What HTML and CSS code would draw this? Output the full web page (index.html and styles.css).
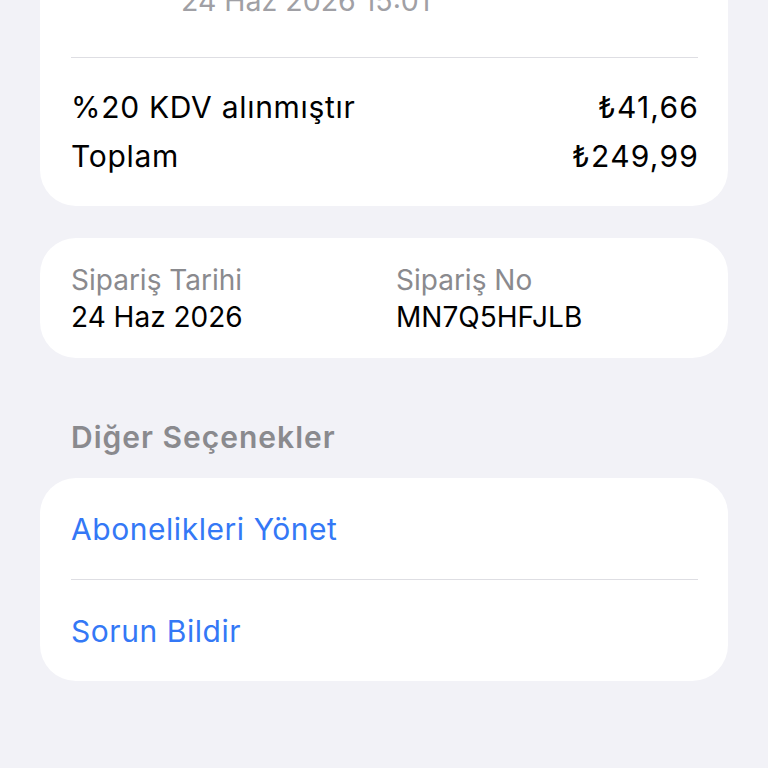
FILE: index.html
```html
<!DOCTYPE html>
<html lang="tr">
<head>
  <meta charset="UTF-8" />
  <meta name="viewport" content="width=device-width, initial-scale=1.0"/>
  <title>Makbuz</title>
  <link rel="stylesheet" href="styles.css">
</head>
<body>

  <div class="card receipt">
    <div class="app-date">24 Haz 2026 15:01</div>
    <div class="divider"></div>
    <div class="totals">
      <div class="total-row">
        <span>%20 KDV alınmıştır</span>
        <span class="amount">₺41,66</span>
      </div>
      <div class="total-row">
        <span>Toplam</span>
        <span class="amount">₺249,99</span>
      </div>
    </div>
  </div>

  <div class="card order">
    <div class="order-col">
      <div class="order-label">Sipariş Tarihi</div>
      <div class="order-value">24 Haz 2026</div>
    </div>
    <div class="order-col">
      <div class="order-label">Sipariş No</div>
      <div class="order-value">MN7Q5HFJLB</div>
    </div>
  </div>

  <h3 class="section-title">Diğer Seçenekler</h3>

  <div class="card options">
    <a class="option" href="#">Abonelikleri Yönet</a>
    <div class="divider"></div>
    <a class="option" href="#">Sorun Bildir</a>
  </div>

</body>
</html>
```

FILE: styles.css
```css
body {
  margin: 0;
  padding: 0 40px 80px;
  background: #f2f2f7;
  font-family: Inter, Roboto, "Liberation Sans", sans-serif;
  font-size: 30px;
  line-height: 34px;
  color: #000;
  overflow: hidden;
}

.card {
  background: #fff;
  border-radius: 36px;
  padding: 0 30px 0 31px;
}

.divider {
  height: 1px;
  background: #dedee3;
}

/* top card, scrolled partly out of view */
.receipt {
  margin-top: -50px;
  padding-top: 34px;
  padding-bottom: 33px;
}

.app-date {
  padding-left: 110px;
  color: #a0a0a5;
  font-size: 28.5px;
  margin-bottom: 39px;
}

.totals {
  padding-top: 32px;
}

.total-row {
  display: flex;
  justify-content: space-between;
  height: 49px;
  letter-spacing: 0.7px;
}

.total-row:last-child {
  height: 34px;
}

.amount {
  letter-spacing: 1.2px;
  margin-right: -1px;
}

.order {
  margin-top: 32px;
  display: grid;
  grid-template-columns: 325px 1fr;
  padding-top: 24px;
  padding-bottom: 22px;
  font-size: 28px;
}

.order-label,
.order-value {
  line-height: 37px;
}

.order-label {
  color: #8a8a8e;
}

.section-title {
  margin: 62px 0 24px 31px;
  font-size: 30px;
  line-height: 34px;
  font-weight: 600;
  letter-spacing: 1px;
  color: #8a8a8e;
}

.options .option {
  display: flex;
  align-items: center;
  height: 101px;
  padding-top: 1px;
  box-sizing: border-box;
  color: #3478f6;
  letter-spacing: 0.55px;
  text-decoration: none;
}
```
